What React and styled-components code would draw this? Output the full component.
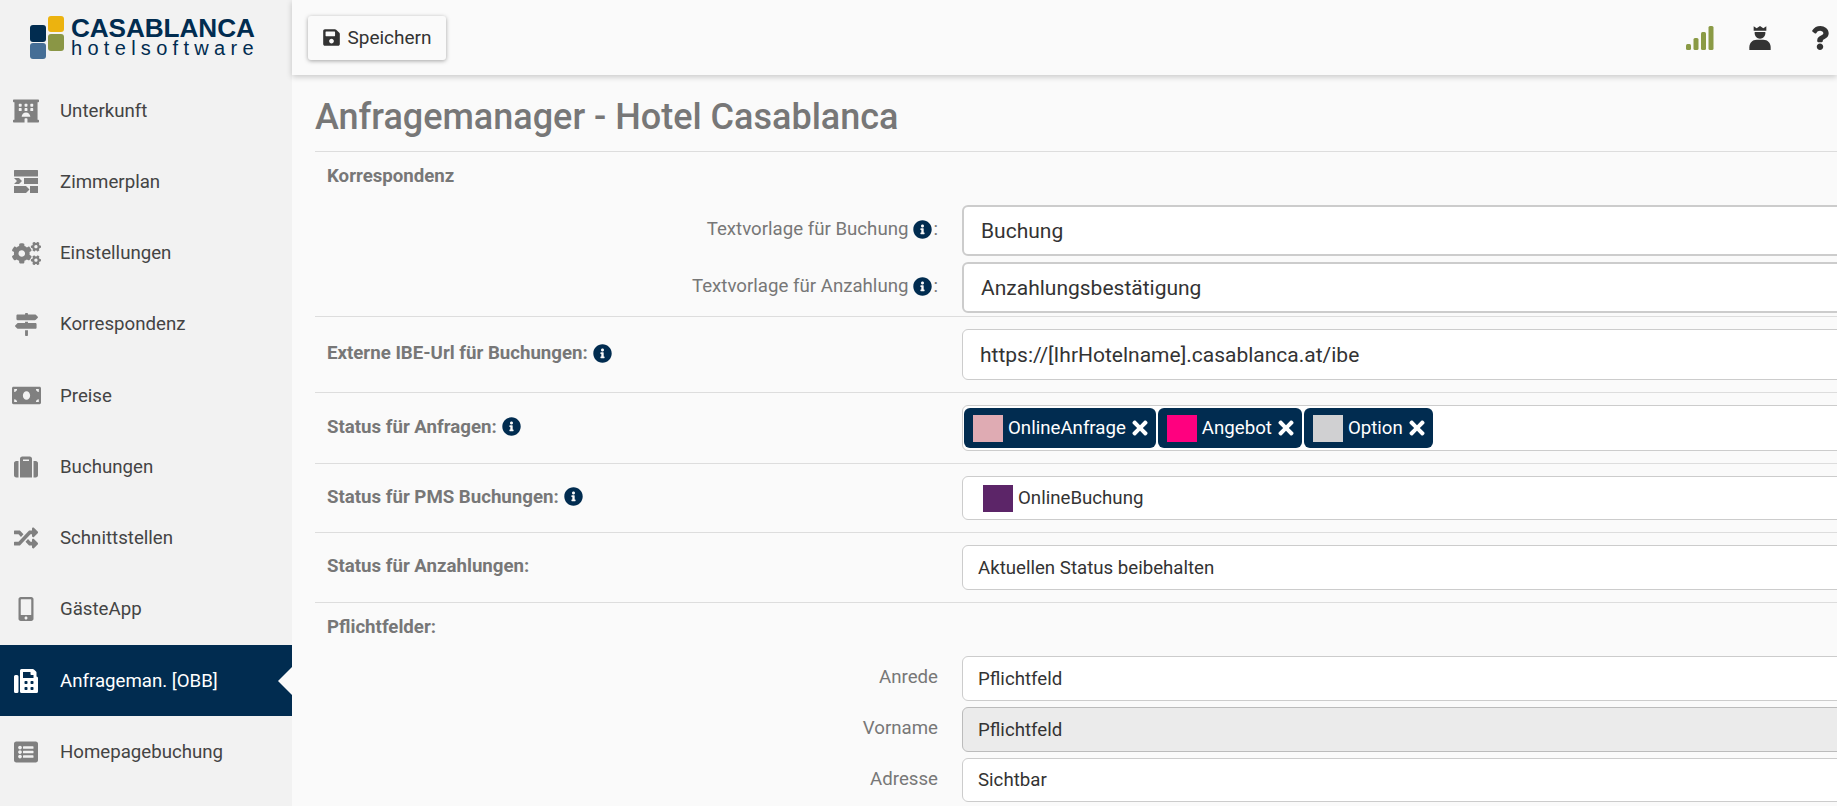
import styled, { createGlobalStyle } from "styled-components";
import {
  FaHotel,
  FaCogs,
  FaMapSigns,
  FaMoneyBill,
  FaSuitcase,
  FaRandom,
  FaMobileAlt,
  FaFax,
  FaListAlt,
  FaSave,
  FaQuestion,
  FaInfoCircle,
  FaTimes,
} from "react-icons/fa";

const navy = "#012c50";

const GlobalStyle = createGlobalStyle`
  html, body {
    margin: 0;
    padding: 0;
    background: #fafafa;
    font-family: Roboto, "Liberation Sans", sans-serif;
    overflow: hidden;
  }
  * {
    box-sizing: border-box;
  }
`;

const Page = styled.div`
  display: flex;
  width: 100%;
  height: 100vh;
  overflow: hidden;
`;

const Sidebar = styled.aside`
  flex: 0 0 292px;
  background: #f2f2f2;
  display: flex;
  flex-direction: column;
`;

const LogoWrap = styled.div`
  height: 75px;
  display: flex;
  align-items: center;
  gap: 7px;
  padding-left: 30px;
`;

const LogoText = styled.div`
  display: flex;
  flex-direction: column;
  font-family: "Liberation Sans", Arial, sans-serif;
  color: ${navy};
`;

const LogoTop = styled.span`
  font-size: 26.2px;
  font-weight: 700;
  line-height: 21px;
  letter-spacing: -0.1px;
`;

const LogoBottom = styled.span`
  font-size: 20px;
  line-height: 19px;
  letter-spacing: 5.3px;
`;

const NavItem = styled.div`
  position: relative;
  height: 71.25px;
  display: flex;
  align-items: center;
  background: ${(p) => (p.$active ? navy : "transparent")};
  color: ${(p) => (p.$active ? "#fff" : "#444")};
  font-size: 18.67px;

  ${(p) =>
    p.$active &&
    `
    &::after {
      content: "";
      position: absolute;
      right: 0;
      top: 50%;
      margin-top: -14px;
      border-style: solid;
      border-width: 14px 14px 14px 0;
      border-color: transparent #fafafa transparent transparent;
    }
  `}
`;

const NavIcon = styled.span`
  flex: 0 0 60px;
  padding-right: 8px;
  display: flex;
  justify-content: center;
  color: ${(p) => (p.$active ? "#fff" : "#808080")};
`;

const Main = styled.main`
  flex: 1;
  min-width: 0;
  display: flex;
  flex-direction: column;
`;

const Header = styled.header`
  height: 75px;
  flex: 0 0 75px;
  background: #fafafa;
  display: flex;
  align-items: center;
  justify-content: space-between;
  padding: 0 0 0 16px;
  box-shadow: 0 2px 6px rgba(0, 0, 0, 0.2);
  position: relative;
`;

const SaveButton = styled.button`
  height: 44px;
  width: 138px;
  margin-top: 1px;
  padding: 0 0 2px;
  display: flex;
  align-items: center;
  justify-content: center;
  gap: 6px;
  border: 0;
  border-radius: 3px;
  background: #fafafa;
  color: #333;
  font-family: inherit;
  font-size: 19px;
  box-shadow: 0 1px 4px rgba(0, 0, 0, 0.35);
`;

const HeaderIcons = styled.div`
  display: flex;
  align-items: center;
  margin-right: -13px;
  color: #333;
`;

const HeaderIcon = styled.span`
  width: 60px;
  display: flex;
  justify-content: center;
`;

const HelpIcon = styled(FaQuestion)`
  height: 24px;
  width: auto;
`;

const Content = styled.div`
  padding-left: 23px;
  width: 1700px;
`;

const Title = styled.h1`
  margin: 0;
  height: 77px;
  padding-top: 20px;
  font-size: 36px;
  line-height: 44px;
  font-weight: 500;
  color: #777;
  border-bottom: 1px solid #ddd;
`;

const Section = styled.section`
  border-bottom: ${(p) => (p.$last ? "0" : "1px solid #ddd")};
  padding: ${(p) => p.$pad || "11px 0"};
`;

const SectionTitle = styled.div`
  height: 53px;
  padding: 12px 0 0 12px;
  font-size: 18.67px;
  line-height: 24px;
  font-weight: 700;
  color: #777;
`;

const Row = styled.div`
  display: grid;
  grid-template-columns: 647px 1fr;
  align-items: center;
  & + & {
    margin-top: 6px;
  }
`;

const BoldLabel = styled.div`
  padding-left: 12px;
  font-size: 18.67px;
  font-weight: 700;
  color: #777;
  display: flex;
  align-items: center;
  margin-top: -3px;
`;

const SubLabel = styled.div`
  padding-right: 24px;
  font-size: 18.67px;
  color: #777;
  display: flex;
  justify-content: flex-end;
  align-items: center;
  margin-top: -3px;
`;

const Info = styled(FaInfoCircle)`
  color: ${navy};
  font-size: 19px;
  flex: none;
  margin: 0 1px 0 5px;
`;

const Field = styled.div`
  height: ${(p) => p.$height}px;
  display: flex;
  align-items: center;
  padding-left: ${(p) => p.$pad || 15}px;
  border: ${(p) => (p.$strong ? "2px solid #ccc" : "1px solid #ccc")};
  border-radius: 6px;
  background: ${(p) => (p.$disabled ? "#ebebeb" : "#fff")};
  border-color: ${(p) => (p.$disabled ? "#bbb" : "#ccc")};
  color: #333;
  font-size: ${(p) => p.$size || 18.67}px;
`;

const TagBox = styled(Field)`
  padding-left: 1px;
  gap: 2px;
`;

const Tag = styled.span`
  height: 40px;
  display: flex;
  align-items: center;
  padding: 0 7px 0 9px;
  gap: 5px;
  border-radius: 6px;
  background: ${navy};
  color: #fff;
  font-size: 18.67px;
`;

const Swatch = styled.span`
  flex: none;
  width: 30px;
  height: 27px;
  background: ${(p) => p.$color};
`;

const SwatchLabel = styled.span`
  margin-left: 5px;
`;

const CloseIcon = styled(FaTimes)`
  height: 22px;
  width: 18px;
  color: #fff;
`;

function RoomPlanIcon() {
  return (
    <svg width="24" height="23" viewBox="0 0 24 23" fill="currentColor">
      <rect x="0" y="0" width="24" height="6.5" rx="0.5" />
      <path d="M0 8h5l3 3-3 3H0l3-3z" />
      <rect x="10" y="8" width="14" height="6" />
      <path d="M0 16h12l3.500 3.500-3.500 3.500H0z" />
      <rect x="16" y="16" width="8" height="7" />
    </svg>
  );
}

function SignalIcon() {
  return (
    <svg width="28" height="24" viewBox="0 0 28 24" fill="#8a9a45">
      <rect x="0" y="18" width="5" height="6" rx="1.500" />
      <rect x="7.500" y="12" width="5" height="12" rx="1.500" />
      <rect x="15" y="6" width="5" height="18" rx="1.500" />
      <rect x="22.500" y="0" width="5" height="24" rx="1.500" />
    </svg>
  );
}

function ConciergeIcon() {
  return (
    <svg width="22" height="24" viewBox="0 0 64 72" fill="#333">
      <path d="M13 1l9 6 10-7 10 7 9-6v13H13z" />
      <path d="M16 18h32v4c0 9-7 16-16 16s-16-7-16-16z" />
      <path d="M0 72v-8c0-13 9-23 22-23h20c13 0 22 10 22 23v8z" />
    </svg>
  );
}

function LogoMark() {
  return (
    <svg width="34" height="43" viewBox="0 0 34 43">
      <rect x="0" y="9" width="16" height="17" rx="3" fill={navy} />
      <rect x="18" y="0" width="16" height="16" rx="3" fill="#ecb30f" />
      <rect x="18" y="18" width="16" height="17" rx="3" fill="#8a9645" />
      <rect x="0" y="27" width="16" height="16" rx="3" fill="#456e96" />
    </svg>
  );
}

const navItems = [
  { label: "Unterkunft", icon: <FaHotel size={26} /> },
  { label: "Zimmerplan", icon: <RoomPlanIcon /> },
  { label: "Einstellungen", icon: <FaCogs size={29} /> },
  { label: "Korrespondenz", icon: <FaMapSigns size={23} /> },
  { label: "Preise", icon: <FaMoneyBill size={29} /> },
  { label: "Buchungen", icon: <FaSuitcase size={24} /> },
  { label: "Schnittstellen", icon: <FaRandom size={24} /> },
  { label: "GästeApp", icon: <FaMobileAlt size={24} /> },
  { label: "Anfrageman. [OBB]", icon: <FaFax size={24} />, active: true },
  { label: "Homepagebuchung", icon: <FaListAlt size={24} /> },
];

const tags = [
  { label: "OnlineAnfrage", color: "#dfabb3" },
  { label: "Angebot", color: "#ff007f" },
  { label: "Option", color: "#d0d0d2" },
];

export default function App() {
  return (
    <Page>
      <GlobalStyle />
      <Sidebar>
        <LogoWrap>
          <LogoMark />
          <LogoText>
            <LogoTop>CASABLANCA</LogoTop>
            <LogoBottom>hotelsoftware</LogoBottom>
          </LogoText>
        </LogoWrap>
        {navItems.map((item) => (
          <NavItem key={item.label} $active={item.active}>
            <NavIcon $active={item.active}>{item.icon}</NavIcon>
            {item.label}
          </NavItem>
        ))}
      </Sidebar>
      <Main>
        <Header>
          <SaveButton>
            <FaSave />
            Speichern
          </SaveButton>
          <HeaderIcons>
            <HeaderIcon>
              <SignalIcon />
            </HeaderIcon>
            <HeaderIcon>
              <ConciergeIcon />
            </HeaderIcon>
            <HeaderIcon>
              <HelpIcon />
            </HeaderIcon>
          </HeaderIcons>
        </Header>
        <Content>
          <Title>Anfragemanager - Hotel Casablanca</Title>
          <Section $pad="0 0 3px">
            <SectionTitle>Korrespondenz</SectionTitle>
            <Row>
              <SubLabel>
                Textvorlage für Buchung
                <Info />:
              </SubLabel>
              <Field $height={51} $size={21} $pad={17} $strong>
                Buchung
              </Field>
            </Row>
            <Row>
              <SubLabel>
                Textvorlage für Anzahlung
                <Info />:
              </SubLabel>
              <Field $height={51} $size={21} $pad={17} $strong>
                Anzahlungsbestätigung
              </Field>
            </Row>
          </Section>
          <Section $pad="12px 0">
            <Row>
              <BoldLabel>
                Externe IBE-Url für Buchungen:
                <Info />
              </BoldLabel>
              <Field $height={51} $size={21} $pad={17}>
                https://[IhrHotelname].casablanca.at/ibe
              </Field>
            </Row>
          </Section>
          <Section $pad="12px 0">
            <Row>
              <BoldLabel>
                Status für Anfragen:
                <Info />
              </BoldLabel>
              <TagBox $height={46}>
                {tags.map((tag) => (
                  <Tag key={tag.label}>
                    <Swatch $color={tag.color} />
                    {tag.label}
                    <CloseIcon />
                  </Tag>
                ))}
              </TagBox>
            </Row>
          </Section>
          <Section $pad="12px 0">
            <Row>
              <BoldLabel>
                Status für PMS Buchungen:
                <Info />
              </BoldLabel>
              <Field $height={44} $pad={20}>
                <Swatch $color="#5c2568" />
                <SwatchLabel>OnlineBuchung</SwatchLabel>
              </Field>
            </Row>
          </Section>
          <Section $pad="12px 0">
            <Row>
              <BoldLabel>Status für Anzahlungen:</BoldLabel>
              <Field $height={45}>Aktuellen Status beibehalten</Field>
            </Row>
          </Section>
          <Section $pad="0" $last>
            <SectionTitle>Pflichtfelder:</SectionTitle>
            <Row>
              <SubLabel>Anrede</SubLabel>
              <Field $height={45}>Pflichtfeld</Field>
            </Row>
            <Row>
              <SubLabel>Vorname</SubLabel>
              <Field $height={45} $disabled>
                Pflichtfeld
              </Field>
            </Row>
            <Row>
              <SubLabel>Adresse</SubLabel>
              <Field $height={44}>Sichtbar</Field>
            </Row>
          </Section>
        </Content>
      </Main>
    </Page>
  );
}
